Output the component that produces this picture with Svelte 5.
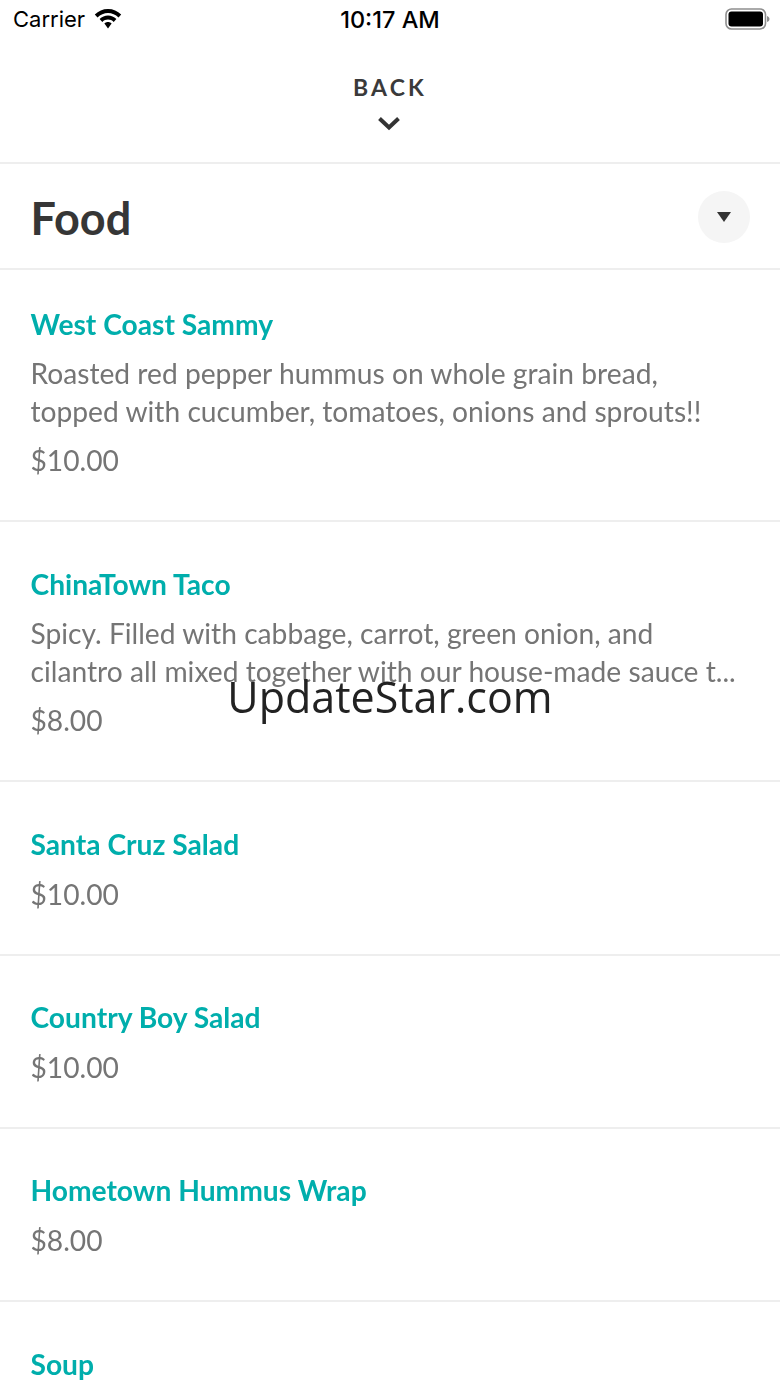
<script lang="ts">
	const items = [
		{ name: 'West Coast Sammy', desc: 'Roasted red pepper hummus on whole grain bread, topped with cucumber, tomatoes, onions and sprouts!!', price: '$10.00' },
		{ name: 'ChinaTown Taco', desc: 'Spicy. Filled with cabbage, carrot, green onion, and cilantro all mixed together with our house-made sauce t...', price: '$8.00' },
		{ name: 'Santa Cruz Salad', price: '$10.00' },
		{ name: 'Country Boy Salad', price: '$10.00' },
		{ name: 'Hometown Hummus Wrap', price: '$8.00' },
		{ name: 'Soup', price: '' }
	];
</script>

<div class="screen">
	<div class="status">
		<div class="status-left">
			<span class="carrier">Carrier</span>
			<svg class="wifi" width="28" height="22" viewBox="0 0 28 22">
				<path d="M14 1C8.800 1 4.500 3 .8 6.500L3.500 9.500C6.500 6.600 10 5 14 5C18 5 21.500 6.600 24.500 9.500L27.200 6.500C23.500 3 19.200 1 14 1Z" fill="#000" />
				<path d="M14 7.500C10.800 7.500 8 8.700 5.600 11L8.300 14C10 12.400 11.800 11.600 14 11.600C16.200 11.600 18 12.400 19.700 14L22.400 11C20 8.700 17.200 7.500 14 7.500Z" fill="#000" />
				<path d="M14 14C12.600 14 11.400 14.500 10.400 15.500L14 20.500L17.600 15.500C16.600 14.500 15.400 14 14 14Z" fill="#000" />
			</svg>
		</div>
		<span class="time">10:17 AM</span>
		<div class="status-right">
			<svg class="battery" width="46" height="22" viewBox="0 0 46 22">
				<rect x="1" y="1" width="39.500" height="20" rx="5.500" fill="none" stroke="#8e8e8e" stroke-width="1.600" />
				<rect x="3.500" y="3.500" width="34.500" height="15" rx="3" fill="#000" />
				<path d="M42 8C43.500 8.500 44.500 9.500 44.500 11C44.500 12.500 43.500 13.500 42 14Z" fill="#8e8e8e" />
			</svg>
		</div>
	</div>

	<div class="back">
		<span class="back-label">BACK</span>
		<svg class="chevron" width="24" height="16" viewBox="0 0 24 16">
			<path d="M2.500 2.500L12 11.500L21.500 2.500" fill="none" stroke="#333" stroke-width="4" />
		</svg>
	</div>

	<div class="section-head">
		<h1>Food</h1>
		<div class="toggle"><span class="caret"></span></div>
	</div>

	<div class="list">
		{#each items as item}
			<div class="item">
				<div class="name">{item.name}</div>
				{#if item.desc}
					<div class="desc">{item.desc}</div>
				{/if}
				{#if item.price}
					<div class="price">{item.price}</div>
				{/if}
			</div>
		{/each}
	</div>

	<div class="watermark">UpdateStar.com</div>
</div>

<style>
	:global(body) { margin: 0; background: #fff; }
	.screen {
		position: relative; width: 780px; height: 1387px; overflow: hidden;
		background: #fff; font-family: 'Lato', sans-serif;
	}
	.status {
		height: 40px; padding: 0 13px 2px; box-sizing: border-box;
		display: flex; align-items: center; justify-content: space-between;
		color: #000; font-family: 'Inter', sans-serif;
	}
	.status-left { display: flex; align-items: center; gap: 9px; width: 220px; }
	.status-right { width: 220px; display: flex; justify-content: flex-end; }
	.battery { margin-right: -4px; }
	.carrier { font-size: 22px; }
	.wifi { margin-top: -1px; }
	.time { font-weight: 500; font-size: 23.500px; }
	.back {
		height: 124px; padding-top: 34px; box-sizing: border-box;
		display: flex; flex-direction: column; align-items: center;
		border-bottom: 2px solid #eeeeee;
	}
	.back-label {
		font-size: 23px; line-height: 26px; font-weight: 700;
		letter-spacing: 3.200px; color: #3a3a3a;
	}
	.chevron { margin-top: 16px; margin-left: -2px; }
	.section-head {
		height: 106px; padding: 0 30px; box-sizing: border-box;
		display: flex; align-items: center; justify-content: space-between;
		border-bottom: 2px solid #eeeeee;
	}
	h1 { margin: 4px 0 0 .5px; font-size: 45px; font-weight: 700; color: #363636; }
	.toggle {
		width: 52px; height: 52px; border-radius: 50%; background: #f5f5f5;
		display: flex; align-items: center; justify-content: center;
		margin-top: 2px;
	}
	.caret {
		width: 0; height: 0; border-style: solid;
		border-width: 10px 7px 0 7px; border-color: #333 transparent transparent transparent;
	}
	.list { will-change: opacity; }
	.item {
		padding: 42.400px 30px 40.930px 30.500px; border-bottom: 2px solid #eeeeee;
	}
	.item:first-child { padding-top: 35px; padding-bottom: 41.330px; }
	.item:nth-child(2) { padding-top: 43px; padding-bottom: 41px; }
	.name { font-size: 28.200px; line-height: 38px; font-weight: 700; color: #00aeac; }
	.desc {
		margin-top: 11px; font-size: 28.200px; line-height: 38px; color: #757575;
	}
	.price { margin-top: 12px; font-size: 28.200px; line-height: 38px; color: #757575; }
	.desc + .price { margin-top: 11px; }
	.watermark {
		position: absolute; left: 0; right: 0; top: 666px; text-align: center;
		font-family: 'Open Sans', sans-serif; font-size: 43px; line-height: 62px; color: #222;
	}
</style>
